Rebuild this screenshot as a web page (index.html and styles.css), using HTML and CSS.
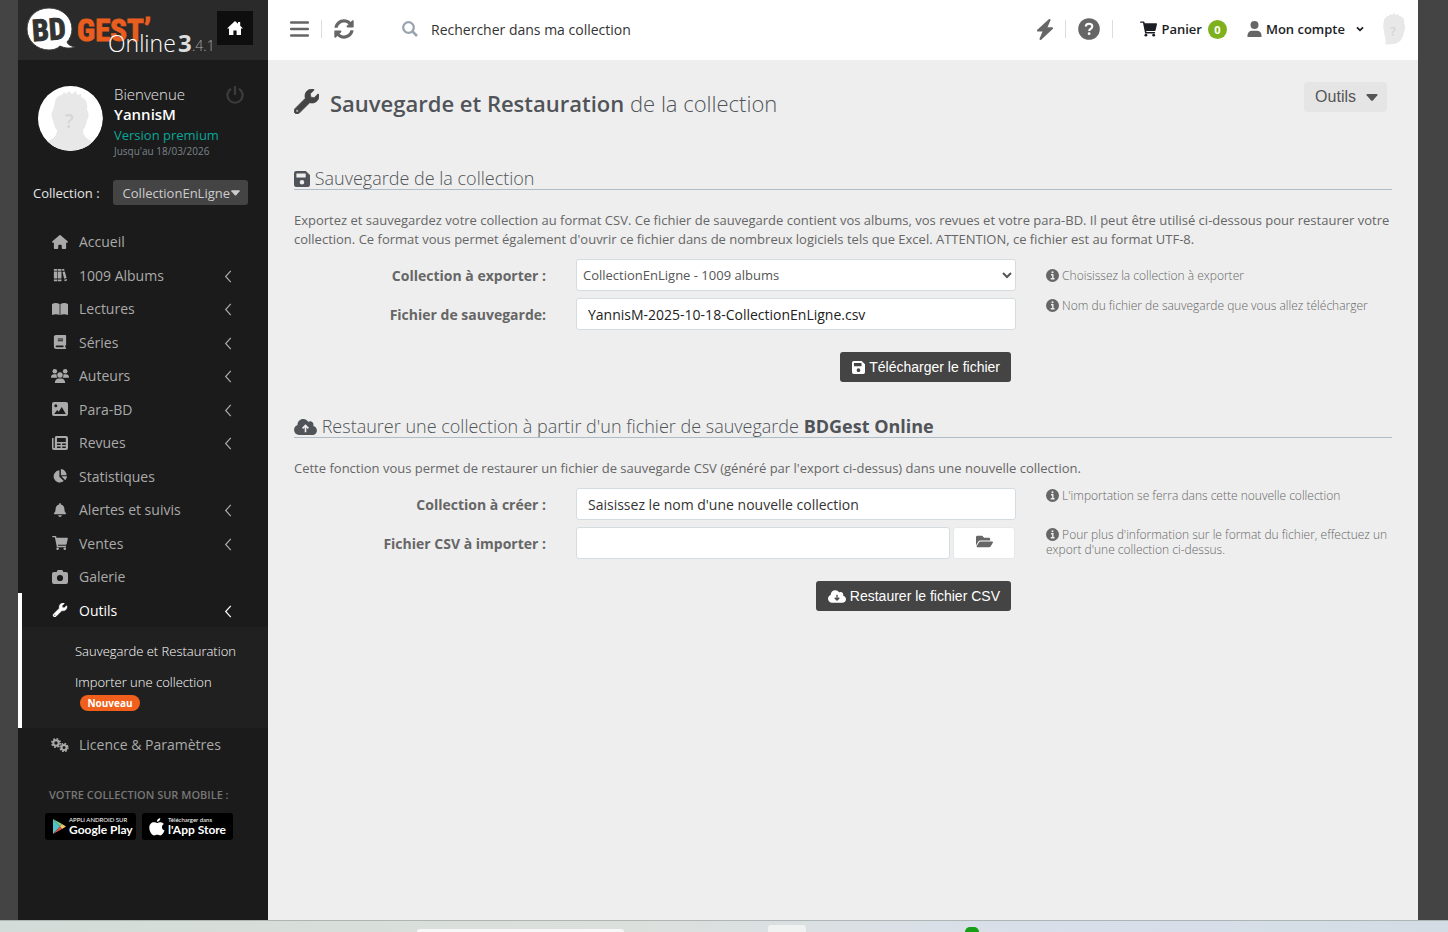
FILE: index.html
```html
<!DOCTYPE html>
<html lang="fr">
<head>
  <meta charset="UTF-8" />
  <meta name="viewport" content="width=device-width, initial-scale=1.0"/>
  <title>BDGest' Online - Sauvegarde et Restauration</title>
  <link rel="stylesheet" href="styles.css">
</head>
<body>
  <svg class="sprite" aria-hidden="true">
    <symbol id="i-home" viewBox="0 0 576 512"><path d="M575.8 255.5c0 18-15 32.1-32 32.1h-32l.7 160.2c0 2.7-.2 5.4-.5 8.1V472c0 22.1-17.9 40-40 40H392c-22.1 0-40-17.9-40-40v-88c0-17.700-14.300-32-32-32h-64c-17.700 0-32 14.300-32 32v88c0 22.100-17.900 40-40 40h-80c-22.100 0-40-17.900-40-40V287.600H32c-18 0-32-14-32-32.100c0-9 3-17 10-24L266.400 8c7-7 15-8 22-8s15 2 21 7L564.800 231.500c8 7 12 15 11 24z"/></symbol>
    <symbol id="i-home-old" viewBox="0 0 16 14"><path d="M8 0l3 2.700V1h2.200v3.700L16 7.400h-2V14H9.600V9.500H6.400V14H2V7.400H0z"/></symbol>
    <symbol id="i-albums" viewBox="0 0 16 16"><path d="M1 1h4v2H1zM1 4h4v8H1zM1 13h4v2H1zM5.700 1h4v2h-4zM5.700 4h4v8h-4zM5.700 13h4v2h-4zM10.300 1.500l2.300-.600.600 1.900-2.300.700zM10.900 4.600l2.600-.700 2 7.600-2.800.800zM12.800 13.300l2.800-.800.400 1.800-2.700.700z"/></symbol>
    <symbol id="i-open-book" viewBox="0 0 16 14"><path d="M0 2C2.500.600 5 .600 7.600 2v11C5 11.800 2.500 11.900 0 13zM8.400 2C11 .600 13.500.600 16 2v11c-2.500-1.100-5-1.200-7.600 0z"/></symbol>
    <symbol id="i-book" viewBox="0 0 448 512"><path fill-rule="evenodd" d="M80 0C30 0 0 30 0 80v352c0 50 30 80 80 80h336c17.700 0 32-14.300 32-32s-14.300-32-32-32v-64c17.700 0 32-14.300 32-32V32c0-17.700-14.300-32-32-32H80zm16 384h256v64H96c-17.700 0-32-14.300-32-32s14.300-32 32-32zm48-256h192v32H144zm0 64h192v32H144z"/></symbol>
    <symbol id="i-users" viewBox="0 0 18 14"><circle cx="3.800" cy="2.300" r="2.300"/><circle cx="14.200" cy="2.300" r="2.300"/><circle cx="9" cy="6" r="2.700"/><path d="M0 8.500C0 6.500 1.300 5.300 3 5.300h1.700c.4 0 .7.100 1 .2C5.400 7 5.800 8 6.400 8.700H.2zM18 8.500c0-2-1.300-3.200-3-3.200h-1.700c-.4 0-.7.100-1 .2.300 1.500-.1 2.500-.7 3.200h6.200zM3.800 14c0-2.700 1.800-4.500 4-4.500h2.400c2.200 0 4 1.800 4 4.500z"/></symbol>
    <symbol id="i-image" viewBox="0 0 16 14"><path fill-rule="evenodd" d="M2 0h12a2 2 0 0 1 2 2v10a2 2 0 0 1-2 2H2a2 2 0 0 1-2-2V2a2 2 0 0 1 2-2zm1.800 2.200a1.500 1.500 0 1 0 0 3 1.500 1.500 0 0 0 0-3zM2.200 12h11.600L9.800 5 6.700 9.800 5.200 8z"/></symbol>
    <symbol id="i-news" viewBox="0 0 16 14"><path fill-rule="evenodd" d="M5 0h9a2 2 0 0 1 2 2v10a2 2 0 0 1-2 2H2a2 2 0 0 1-2-2V2h1.500v10h1.300V2A2 2 0 0 1 5 0zm0 2v4h8.800V2zM5 7.500V9h3.600V7.500zm5.200 0V9h3.600V7.500zM5 10.500V12h3.600v-1.500zm5.200 0V12h3.600v-1.500z"/></symbol>
    <symbol id="i-pie" viewBox="0 0 16 16"><path d="M9 0a7 7 0 0 1 6.500 7H9zM9.500 8.300H16a6.500 6.500 0 0 1-2 4.600zM7.300 1.500v7.300l5 5A7 7 0 1 1 7.300 1.500z"/></symbol>
    <symbol id="i-bell" viewBox="0 0 448 512"><path d="M224 512c35.320 0 63.970-28.650 63.970-64H160.030c0 35.350 28.650 64 63.970 64zm215.390-149.710c-19.320-20.760-55.470-51.990-55.470-154.290 0-77.700-54.480-139.900-127.940-155.160V32c0-17.670-14.320-32-31.980-32s-31.980 14.330-31.980 32v20.840C118.560 68.100 64.080 130.300 64.080 208c0 102.300-36.150 133.530-55.470 154.290-6 6.450-8.660 14.160-8.610 21.710.11 16.400 12.980 32 32.100 32h383.800c19.120 0 32-15.600 32.100-32 .05-7.550-2.610-15.270-8.610-21.710z"/></symbol>
    <symbol id="i-cart" viewBox="0 0 576 512"><path d="M528.120 301.319l47.273-208C578.806 78.301 567.391 64 551.990 64H159.208l-9.166-44.810C147.758 8.021 137.930 0 126.529 0H24C10.745 0 0 10.745 0 24v0c0 13.255 10.745 24 24 24h77l73 360h330l10-48H218.117l-6.545-40h293.145c11.206 0 20.920-7.754 23.403-18.681z"/><circle cx="200" cy="464" r="48"/><circle cx="464" cy="464" r="48"/></symbol>
    <symbol id="i-camera" viewBox="0 0 16 14"><path fill-rule="evenodd" d="M5.600 0h4.800l.900 2H14a2 2 0 0 1 2 2v8a2 2 0 0 1-2 2H2a2 2 0 0 1-2-2V4a2 2 0 0 1 2-2h2.700zM8 4.900a3.100 3.100 0 1 0 0 6.200 3.100 3.100 0 0 0 0-6.200z"/></symbol>
    <symbol id="i-wrench" viewBox="0 0 512 512"><path d="M507.730 109.100c-2.240-9.030-13.540-12.090-20.120-5.510l-74.360 74.360-67.880-11.310-11.310-67.880 74.360-74.360c6.620-6.620 3.430-17.900-5.660-20.160-47.380-11.740-99.550.91-136.580 37.930-39.640 39.640-50.550 97.100-34.050 147.200L18.740 402.760c-24.990 24.990-24.990 65.510 0 90.500 24.990 24.990 65.510 24.990 90.500 0l213.210-213.210c50.120 16.710 107.470 5.680 147.370-34.220 37.070-37.070 49.700-89.320 37.910-136.730zM64 472c-13.250 0-24-10.750-24-24 0-13.260 10.750-24 24-24s24 10.740 24 24c0 13.250-10.750 24-24 24z" stroke="currentColor" stroke-width="14"/></symbol>
    <symbol id="i-gears" viewBox="0 0 18 14"><g fill="none" stroke="currentColor"><circle cx="5" cy="5" r="2.700" stroke-width="2"/><circle cx="5" cy="5" r="4.200" stroke-width="1.600" stroke-dasharray="1.800 1.500"/><circle cx="13" cy="9.500" r="2.500" stroke-width="2"/><circle cx="13" cy="9.500" r="3.900" stroke-width="1.600" stroke-dasharray="1.700 1.360"/></g></symbol>
    <symbol id="i-left" viewBox="0 0 8 14"><path d="M7 1L1.500 7 7 13" fill="none" stroke="currentColor" stroke-width="1.300"/></symbol>
    <symbol id="i-power" viewBox="0 0 18 18"><path d="M5 2.700a7.600 7.600 0 1 0 8 0M9 0v9" fill="none" stroke="currentColor" stroke-width="2.200"/></symbol>
    <symbol id="i-caret" viewBox="0 0 10 6"><path d="M1 0h8q1 0 .6 1L5.800 5.500q-.8.700-1.600 0L.400 1Q0 0 1 0z"/></symbol>
    <symbol id="i-menu" viewBox="0 0 19 16"><path d="M1 1.500h17M1 8h17M1 14.500h17" stroke="currentColor" stroke-width="2.500" stroke-linecap="round"/></symbol>
    <symbol id="i-sync" viewBox="0 0 512 512"><path d="M370.720 133.280C339.458 104.008 298.888 87.962 255.848 88c-77.458.068-144.328 53.178-162.791 126.850-1.344 5.363-6.122 9.150-11.651 9.150H24.103c-7.498 0-13.194-6.807-11.807-14.176C33.933 94.924 134.813 8 256 8c66.448 0 126.791 26.136 171.315 68.685L463.030 40.970C478.149 25.851 504 36.559 504 57.941V192c0 13.255-10.745 24-24 24H345.941c-21.382 0-32.090-25.851-16.971-40.971l41.750-41.749zM32 296h134.059c21.382 0 32.090 25.851 16.971 40.971l-41.750 41.750c31.262 29.273 71.835 45.319 114.876 45.280 77.418-.07 144.315-53.144 162.787-126.849 1.344-5.363 6.122-9.150 11.651-9.150h57.304c7.498 0 13.194 6.807 11.807 14.176C478.067 417.076 377.187 504 256 504c-66.448 0-126.791-26.136-171.315-68.685L48.970 471.030C33.851 486.149 8 475.441 8 454.059V320c0-13.255 10.745-24 24-24z"/></symbol>
    <symbol id="i-search" viewBox="0 0 16 16"><g fill="none" stroke="currentColor"><circle cx="6.500" cy="6.500" r="5.300" stroke-width="2.300"/><path d="M10.400 10.400l4.600 4.600" stroke-width="2.600"/></g></symbol>
    <symbol id="i-bolt" viewBox="0 0 16 21"><path d="M12.500 1L1 11.600h6L3.500 20 15 9.200H9z" stroke="currentColor" stroke-width="2" stroke-linejoin="round"/></symbol>
    <symbol id="i-help" viewBox="0 0 22 22"><circle cx="11" cy="11" r="10.800"/><path d="M7.800 8.600c0-1.800 1.200-2.800 3.200-2.800 1.900 0 3.300 1 3.300 2.700 0 1.300-.8 1.900-1.800 2.500-.9.500-1.300.9-1.300 2" fill="none" stroke="#fff" stroke-width="2.100"/><circle cx="11.100" cy="15.700" r="1.400" fill="#fff"/></symbol>
    <symbol id="i-user" viewBox="0 0 14 16"><circle cx="7" cy="4" r="4"/><path d="M0 16v-1.500C0 11.800 2 9.800 4.500 9.800h5c2.500 0 4.500 2 4.500 4.700V16z"/></symbol>
    <symbol id="i-down" viewBox="0 0 8 6"><path d="M1 1.300l3 3 3-3" fill="none" stroke="currentColor" stroke-width="1.800"/></symbol>
    <symbol id="i-save" viewBox="0 0 16 16"><path fill-rule="evenodd" d="M2.200 0h9.600L16 4v9.800a2.200 2.200 0 0 1-2.200 2.200H2.200A2.200 2.200 0 0 1 0 13.800V2.200A2.200 2.200 0 0 1 2.200 0zm.2 2.500v4h9.300v-4zM8 9a2.300 2.300 0 1 0 0 4.600A2.300 2.300 0 0 0 8 9z"/></symbol>
    <symbol id="i-cloud-up" viewBox="0 32 640 448"><path d="M537.600 226.600c4.100-10.700 6.400-22.400 6.400-34.600 0-53-43-96-96-96-19.700 0-38.100 6-53.300 16.200C367 64.200 315.300 32 256 32c-88.400 0-160 71.600-160 160 0 2.700.1 5.400.2 8.100C40.200 219.800 0 273.200 0 336c0 79.500 64.500 144 144 144h368c70.700 0 128-57.300 128-128 0-61.900-44-113.600-102.400-125.400z"/><path d="M320 400V215m-82 80l82-82 82 82" fill="none" stroke="#eee" stroke-width="46"/></symbol>
    <symbol id="i-cloud-down" viewBox="0 32 640 448"><path d="M537.600 226.600c4.100-10.700 6.400-22.400 6.400-34.600 0-53-43-96-96-96-19.700 0-38.100 6-53.300 16.200C367 64.200 315.300 32 256 32c-88.400 0-160 71.600-160 160 0 2.700.1 5.400.2 8.100C40.200 219.800 0 273.200 0 336c0 79.500 64.500 144 144 144h368c70.700 0 128-57.300 128-128 0-61.900-44-113.600-102.400-125.400z"/><path d="M320 190v190m-82-82l82 82 82-82" fill="none" stroke="#444" stroke-width="46"/></symbol>
    <symbol id="i-info" viewBox="0 0 12 12"><circle cx="6" cy="6" r="6"/><path d="M4.600 5.300h1.700V9M4.300 9h3.600" fill="none" stroke="#eee" stroke-width="1.300"/><circle cx="6" cy="3" r="1" fill="#eee"/></symbol>
    <symbol id="i-folder" viewBox="0 64 576 384"><path d="M572.694 292.093L500.270 416.248A63.997 63.997 0 0 1 444.989 448H45.025c-18.523 0-30.064-20.093-20.731-36.093l72.424-124.155A64 64 0 0 1 152 256h399.964c18.523 0 30.064 20.093 20.730 36.093zM152 224h328v-48c0-26.510-21.490-48-48-48H272l-64-64H48C21.490 64 0 85.490 0 112v278.046l69.077-118.418C86.214 242.250 117.989 224 152 224z"/></symbol>
  </svg>

  <div class="app">
    <aside class="sidebar">
      <header class="brand">
        <a class="brand-logo" href="#" aria-label="BDGest' Online">
          <svg class="logo" width="200" height="60" viewBox="0 0 200 60">
            <path d="M31 8C44 8 54 17 54 29c0 5-2 10-5 13 1 3 4 4 8 5-5 2-11 1-15-1-3 3-7 4-11 4C19 50 9 41 9 29S18 8 31 8z" fill="#fff" stroke="#3a3a3a" stroke-width="1"/>
            <text class="logo-bd" x="14" y="40" transform="rotate(-4 31 29)">BD</text>
            <text class="logo-gest" x="59" y="41">GEST’</text>
            <text class="logo-online" x="90" y="52">Online</text>
            <text class="logo-major" x="160" y="52">3</text>
            <text class="logo-minor" x="174" y="51">.4.1</text>
          </svg>
        </a>
        <a class="brand-home" href="#" aria-label="Accueil BDGest"><svg width="16" height="14"><use href="#i-home-old"/></svg></a>
      </header>

      <section class="user">
        <svg class="user-avatar" viewBox="0 0 65 65" aria-hidden="true">
          <circle cx="32" cy="32" r="33" fill="#fff"/>
          <path d="M17 17c0-5 4-8 7-8l2-3 2 2 3-3 3 3 4-3 1 4 4-1v3c5 2 7 6 6 13 2 2 2 8 0 10-1 5-2 8-4 10 0 6 4 9 10 12-11 12-35 12-46 0 6-3 10-6 10-12-2-2-3-5-4-10-2-2-2-8 0-10z" fill="#e8e8e8"/>
          <text x="27" y="42" class="avatar-mark">?</text>
        </svg>
        <div class="user-info">
          <span class="user-hello">Bienvenue</span>
          <strong class="user-name">YannisM</strong>
          <span class="user-plan">Version premium</span>
          <span class="user-until">Jusqu'au 18/03/2026</span>
        </div>
        <button class="user-logout" aria-label="Déconnexion"><svg width="18" height="18"><use href="#i-power"/></svg></button>
      </section>

      <div class="picker">
        <span>Collection :</span>
        <button class="picker-btn">CollectionEnLigne<svg width="9" height="6"><use href="#i-caret"/></svg></button>
      </div>

      <nav>
        <ul class="menu">
          <li><a href="#"><svg><use href="#i-home"/></svg>Accueil</a></li>
          <li><a href="#"><svg><use href="#i-albums"/></svg>1009 Albums<svg class="arrow"><use href="#i-left"/></svg></a></li>
          <li><a href="#"><svg><use href="#i-open-book"/></svg>Lectures<svg class="arrow"><use href="#i-left"/></svg></a></li>
          <li><a href="#"><svg><use href="#i-book"/></svg>Séries<svg class="arrow"><use href="#i-left"/></svg></a></li>
          <li><a href="#"><svg><use href="#i-users"/></svg>Auteurs<svg class="arrow"><use href="#i-left"/></svg></a></li>
          <li><a href="#"><svg><use href="#i-image"/></svg>Para-BD<svg class="arrow"><use href="#i-left"/></svg></a></li>
          <li><a href="#"><svg><use href="#i-news"/></svg>Revues<svg class="arrow"><use href="#i-left"/></svg></a></li>
          <li><a href="#"><svg><use href="#i-pie"/></svg>Statistiques</a></li>
          <li><a href="#"><svg><use href="#i-bell"/></svg>Alertes et suivis<svg class="arrow"><use href="#i-left"/></svg></a></li>
          <li><a href="#"><svg><use href="#i-cart"/></svg>Ventes<svg class="arrow"><use href="#i-left"/></svg></a></li>
          <li><a href="#"><svg><use href="#i-camera"/></svg>Galerie</a></li>
          <li class="active">
            <a href="#"><svg><use href="#i-wrench"/></svg>Outils<svg class="arrow"><use href="#i-left"/></svg></a>
            <ul class="submenu">
              <li><a href="#">Sauvegarde et Restauration</a></li>
              <li><a href="#">Importer une collection <span class="tag">Nouveau</span></a></li>
            </ul>
          </li>
          <li><a href="#"><svg><use href="#i-gears"/></svg>Licence &amp; Paramètres</a></li>
        </ul>
      </nav>

      <section class="mobile">
        <h2>Votre collection sur mobile :</h2>
        <div class="stores">
          <a class="store" href="#">
            <svg width="14" height="15" viewBox="0 0 14 15"><path d="M1 0l7 7.500L1 15z" fill="#4fc3c9"/><path d="M1 0l9 5-2 2.500z" fill="#7fd08a"/><path d="M1 15l9-5-2-2.500z" fill="#e0524c"/><path d="M10 5l4 2.500-4 2.500-2-2.500z" fill="#f3c66b"/></svg>
            <span><small>APPLI ANDROID SUR</small><b>Google Play</b></span>
          </a>
          <a class="store" href="#">
            <svg width="16" height="18" viewBox="0 0 16 18"><path d="M11.300 0c.1 2-1.500 3.800-3.400 3.800C7.700 2 9.400.200 11.300 0zM8.200 5c1-.1 2-.9 3.400-.8 1.300.1 2.500.7 3.200 1.700-2.700 1.700-2.300 5.400.7 6.600C14.700 14.800 13 17.500 11.300 17.500c-1.200 0-1.600-.7-3-.7s-1.900.7-3 .7C2.900 17.500.3 13.200.3 9.700c0-3.500 2.300-5.400 4.500-5.400C6.200 4.300 7.400 5 8.200 5z" fill="#fff"/></svg>
            <span><small>Télécharger dans</small><b>l'App Store</b></span>
          </a>
        </div>
      </section>
    </aside>

    <div class="main">
      <header class="topbar">
        <button class="tool" aria-label="Menu"><svg width="19" height="16"><use href="#i-menu"/></svg></button>
        <span class="sep"></span>
        <button class="tool" aria-label="Actualiser"><svg width="20" height="20"><use href="#i-sync"/></svg></button>
        <label class="search">
          <svg width="16" height="16"><use href="#i-search"/></svg>
          <input type="text" placeholder="Rechercher dans ma collection" aria-label="Rechercher dans ma collection">
        </label>
        <button class="tool" aria-label="Raccourcis"><svg width="16" height="21"><use href="#i-bolt"/></svg></button>
        <span class="sep"></span>
        <button class="tool" aria-label="Aide"><svg width="22" height="22"><use href="#i-help"/></svg></button>
        <span class="sep"></span>
        <a class="top-link cart" href="#"><svg width="17" height="16"><use href="#i-cart"/></svg>Panier <span class="count">0</span></a>
        <a class="top-link account" href="#"><svg class="grey" width="15" height="16"><use href="#i-user"/></svg>Mon compte<svg class="chev" width="8" height="6"><use href="#i-down"/></svg></a>
        <svg class="top-avatar" width="24" height="32" viewBox="0 0 24 32" aria-hidden="true">
          <path d="M2 8c0-3 3-5 5-5l1-2 2 1 2-2 2 2 3-1v2c4 0 6 4 5 8 2 2 1 6 0 8-1 7-5 12-11 12-3 0-6 1-8 0 2-3-1-9-1-13-1-3-1-7 0-10z" fill="#e8e8e8"/>
          <text x="8" y="23" class="avatar-mark small">?</text>
        </svg>
      </header>

      <main class="content">
        <div class="page-head">
          <svg width="25" height="25"><use href="#i-wrench"/></svg>
          <h1><strong>Sauvegarde et Restauration</strong> de la collection</h1>
          <button class="tools-btn">Outils <svg width="12" height="7"><use href="#i-caret"/></svg></button>
        </div>

        <form class="panel">
          <h2><svg width="16" height="16"><use href="#i-save"/></svg> Sauvegarde de la collection</h2>
          <p>Exportez et sauvegardez votre collection au format CSV. Ce fichier de sauvegarde contient vos albums, vos revues et votre para-BD. Il peut être utilisé ci-dessous pour restaurer votre collection. Ce format vous permet également d'ouvrir ce fichier dans de nombreux logiciels tels que Excel. ATTENTION, ce fichier est au format UTF-8.</p>
          <div class="row">
            <label for="export">Collection à exporter :</label>
            <select id="export" class="field"><option>CollectionEnLigne - 1009 albums</option></select>
            <span class="hint"><svg><use href="#i-info"/></svg> Choisissez la collection à exporter</span>
          </div>
          <div class="row">
            <label for="filename">Fichier de sauvegarde:</label>
            <input id="filename" class="field" type="text" value="YannisM-2025-10-18-CollectionEnLigne.csv">
            <span class="hint hint-top"><svg><use href="#i-info"/></svg> Nom du fichier de sauvegarde que vous allez télécharger</span>
          </div>
          <div class="row actions">
            <button type="button" class="btn"><svg width="13" height="13"><use href="#i-save"/></svg>Télécharger le fichier</button>
          </div>
        </form>

        <form class="panel">
          <h2><svg width="23" height="16"><use href="#i-cloud-up"/></svg> Restaurer une collection à partir d'un fichier de sauvegarde <strong>BDGest Online</strong></h2>
          <p>Cette fonction vous permet de restaurer un fichier de sauvegarde CSV (généré par l'export ci-dessus) dans une nouvelle collection.</p>
          <div class="row">
            <label for="newname">Collection à créer :</label>
            <input id="newname" class="field" type="text" placeholder="Saisissez le nom d'une nouvelle collection">
            <span class="hint hint-top"><svg><use href="#i-info"/></svg> L'importation se ferra dans cette nouvelle collection</span>
          </div>
          <div class="row">
            <label for="csv">Fichier CSV à importer :</label>
            <div class="file">
              <input id="csv" class="field" type="text">
              <button type="button" class="browse" aria-label="Parcourir"><svg width="17" height="13"><use href="#i-folder"/></svg></button>
            </div>
            <span class="hint hint-top"><svg><use href="#i-info"/></svg> Pour plus d'information sur le format du fichier, effectuez un export d'une collection ci-dessus.</span>
          </div>
          <div class="row actions">
            <button type="button" class="btn"><svg width="18" height="13"><use href="#i-cloud-down"/></svg>Restaurer le fichier CSV</button>
          </div>
        </form>
      </main>
    </div>
  </div>

  <footer class="taskbar">
    <span class="task-search"></span>
    <span class="task-app"></span>
    <span class="task-dot"></span>
  </footer>
</body>
</html>
```
FILE: styles.css
```css
* { margin: 0; padding: 0; box-sizing: border-box; }
body {
  font-family: "Open Sans", Arial, sans-serif;
  font-size: 13px;
  color: #666;
  background: #444;
  min-height: 100vh;
  display: flex;
  flex-direction: column;
}
a { color: inherit; text-decoration: none; }
ul { list-style: none; }
button, input, select { font: inherit; color: inherit; }
button { border: none; background: none; cursor: pointer; }
svg { fill: currentColor; flex: none; }
.sprite { display: none; }
.app {
  flex: 1;
  display: flex;
  margin: 0 30px 0 18px;
}

/* sidebar */
.sidebar {
  width: 250px;
  flex: none;
  background: #1b1b1b;
  color: #aaa;
}
.brand {
  height: 60px;
  background: #2a2a2a;
  display: flex;
  align-items: center;
  padding-bottom: 4px;
}
.brand-logo { height: 56px; width: 199px; }
.logo { display: block; overflow: visible; }
.logo-bd { font: bold 30px "Liberation Sans Narrow", "Roboto Condensed", sans-serif; fill: #333; stroke: #333; stroke-width: 1px; }
.logo-gest { font: bold 31px "Liberation Sans Narrow", "Roboto Condensed", sans-serif; fill: #e95d1e; stroke: #e95d1e; stroke-width: 1px; }
.logo-online { font-size: 23px; font-weight: 300; fill: #fff; }
.logo-major { font-size: 24px; font-weight: 700; fill: #ddd; }
.logo-minor { font-size: 14px; font-weight: 300; fill: #aaa; }
.brand-home {
  width: 36px;
  height: 34px;
  background: #0e0e0e;
  color: #fff;
  display: flex;
  align-items: center;
  justify-content: center;
}
.user {
  display: flex;
  align-items: flex-start;
  padding: 26px 24px 0 20px;
}
.user-avatar {
  width: 65px;
  height: 65px;
  border-radius: 50%;
}
.avatar-mark { font-size: 19px; font-weight: 600; fill: #d6d6d6; }
.avatar-mark.small { font-size: 13px; }
.user-info {
  flex: 1;
  margin-left: 11px;
  display: flex;
  flex-direction: column;
}
.user-hello { font-size: 15px; line-height: 16px; color: #e5e5e5; font-weight: 300; }
.user-name { font-size: 15px; line-height: 24px; color: #fff; font-weight: 600; }
.user-plan { line-height: 18px; color: #0aa699; }
.user-until { font-size: 10px; line-height: 14px; color: #7b838c; }
.user-logout { color: #3c3c3c; height: 18px; }
.picker {
  display: flex;
  align-items: center;
  justify-content: space-between;
  margin-top: 22px;
  padding: 0 20px 0 15px;
  color: #e5e5e5;
}
.picker-btn {
  height: 25px;
  padding: 0 8px 0 10px;
  border-radius: 3px;
  background: #444;
  color: #ccc;
  display: flex;
  align-items: center;
  gap: 1px;
}
.menu {
  margin-top: 20px;
  font-size: 14px;
}
.menu > li > a {
  display: flex;
  align-items: center;
  height: 33px;
  padding: 0 36px 0 33px;
}
.menu > li:nth-child(even) > a { height: 34px; }
.menu svg {
  width: 18px;
  height: 14px;
  margin-right: 10px;
}
.menu .arrow {
  width: 8px;
  height: 13px;
  margin: 2px 0 0 auto;
}
.menu .active {
  border-left: 4px solid #fff;
  color: #fff;
}
.menu .active > a { padding-left: 29px; }
.submenu {
  background: #202020;
  padding: 9px 20px 17px 53px;
  font-size: 13px;
  font-weight: 300;
  color: #fff;
}
.submenu li { padding: 7px 0; line-height: 17px; }
.submenu li + li { padding-bottom: 0; }
.tag {
  display: block;
  width: 60px;
  height: 16px;
  margin: 4px 5px 0;
  border-radius: 8px;
  background: #f0601c;
  color: #fff;
  font-size: 10px;
  font-weight: 700;
  line-height: 16px;
  text-align: center;
}
.mobile { padding: 26px 27px 0; }
.mobile h2 {
  padding-left: 4px;
  font-size: 11px;
  font-weight: 600;
  line-height: 16px;
  text-transform: uppercase;
  color: #777;
  white-space: nowrap;
}
.stores {
  display: flex;
  gap: 6px;
  margin-top: 10px;
}
.store {
  width: 91px;
  height: 27px;
  padding-left: 7px;
  border-radius: 3px;
  background: #000;
  color: #fff;
  display: flex;
  align-items: center;
  gap: 3px;
  white-space: nowrap;
  font-family: Lato, sans-serif;
}
.store span { display: flex; flex-direction: column; }
.store small { font-size: 6px; line-height: 6px; }
.store b { font-size: 12px; line-height: 13px; }

/* top bar */
.main {
  flex: 1;
  min-width: 0;
  background: #eee;
}
.topbar {
  height: 60px;
  padding: 0 12px 2px 22px;
  background: #fff;
  display: flex;
  align-items: center;
}
.tool {
  color: #666;
  display: flex;
}
.sep {
  width: 1px;
  height: 18px;
  margin: 0 12px;
  background: #ddd;
}
.search {
  flex: 1;
  display: flex;
  align-items: center;
  gap: 13px;
  padding-left: 48px;
  color: #9aa4ae;
}
.search input {
  flex: 1;
  border: none;
  outline: none;
  font-size: 14px;
}
.search input::placeholder { color: #333; opacity: 1; }
.top-link {
  display: flex;
  align-items: center;
  gap: 4px;
  font-size: 13px;
  font-weight: 600;
  color: #1b1e24;
}
.cart { margin-left: 15px; }
.count {
  width: 19px;
  height: 19px;
  margin-left: 2px;
  border-radius: 50%;
  background: #7fb01d;
  color: #fff;
  font-size: 11px;
  font-weight: 700;
  line-height: 19px;
  text-align: center;
}
.account { margin-left: 20px; }
.grey { color: #666; }
.chev { margin-left: 7px; }
.top-avatar { margin-left: 18px; }

/* content */
.content { padding: 22px 26px; }
.page-head {
  display: flex;
  align-items: center;
  color: #444;
}
.page-head h1 {
  flex: 1;
  margin: 4px 0 0 11px;
  font-size: 22px;
  font-weight: 300;
  line-height: 32px;
  color: #505458;
}
.page-head strong { font-weight: 600; }
.tools-btn {
  height: 30px;
  margin: 0 5px 8px 0;
  padding: 0 9px 0 11px;
  border-radius: 4px;
  background: #e5e5e5;
  color: #555;
  font: 16px "Liberation Sans", Arial, sans-serif;
  display: flex;
  align-items: center;
  gap: 10px;
}
.panel { margin-top: 48px; }
.panel + .panel { margin-top: 34px; }
.panel h2 {
  border-bottom: 1px solid #b0bcc6;
  font-size: 18px;
  font-weight: 300;
  line-height: 21px;
  color: #505458;
}
.panel h2 svg { vertical-align: -2px; }
.panel h2 strong { font-weight: 700; }
.panel p {
  margin: 21px 0 10px;
  line-height: 19px;
}
.row {
  display: grid;
  grid-template-columns: 252fr 440fr 346fr;
  gap: 30px;
  align-items: center;
  margin-bottom: 7px;
}
.row label {
  font-size: 14px;
  font-weight: 700;
  text-align: right;
}
.field {
  width: 100%;
  height: 32px;
  padding: 0 11px;
  border: 1px solid #d5dce0;
  border-radius: 3px;
  background: #fff;
  color: #222;
  font-size: 14px;
}
.field::placeholder { color: #333; opacity: 1; }
select.field {
  padding: 0 2px;
  font-size: 13px;
  color: #555;
}
.hint {
  font-size: 12px;
  font-weight: 300;
  line-height: 15px;
  color: #666;
}
.hint-top { align-self: start; }
.hint svg {
  width: 13px;
  height: 13px;
  vertical-align: -2px;
}
.file {
  display: flex;
  gap: 3px;
  padding-right: 1px;
}
.file .field { flex: 1; min-width: 0; }
.browse {
  width: 62px;
  height: 32px;
  border: 1px solid #e5e9ec;
  border-radius: 3px;
  background: #fff;
}
.actions { margin-top: 22px; }
.btn {
  grid-column: 2;
  justify-self: end;
  height: 30px;
  margin-right: 5px;
  padding: 0 11px 0 12px;
  border-radius: 3px;
  background: #444;
  color: #fff;
  font: 14px "Liberation Sans", Arial, sans-serif;
  display: flex;
  align-items: center;
  gap: 4px;
  white-space: nowrap;
}

/* bottom strip */
.taskbar {
  height: 12px;
  padding-left: 417px;
  border-top: 1px solid #adb5b5;
  background: linear-gradient(90deg, #d3dcd8, #dce0dc 42%, #d8dfeb 75%, #d3dce4);
  display: flex;
  align-items: flex-end;
  overflow: hidden;
}
.taskbar span { flex: none; }
.task-search {
  width: 207px;
  height: 3px;
  border-radius: 10px 10px 0 0;
  background: #f6f7f6;
}
.task-app {
  width: 38px;
  height: 7px;
  margin-left: 144px;
  border-radius: 3px 3px 0 0;
  background: #f0f2f2;
}
.task-dot {
  width: 14px;
  height: 5px;
  margin-left: 159px;
  border-radius: 7px 7px 0 0;
  background: #16a016;
}
```
